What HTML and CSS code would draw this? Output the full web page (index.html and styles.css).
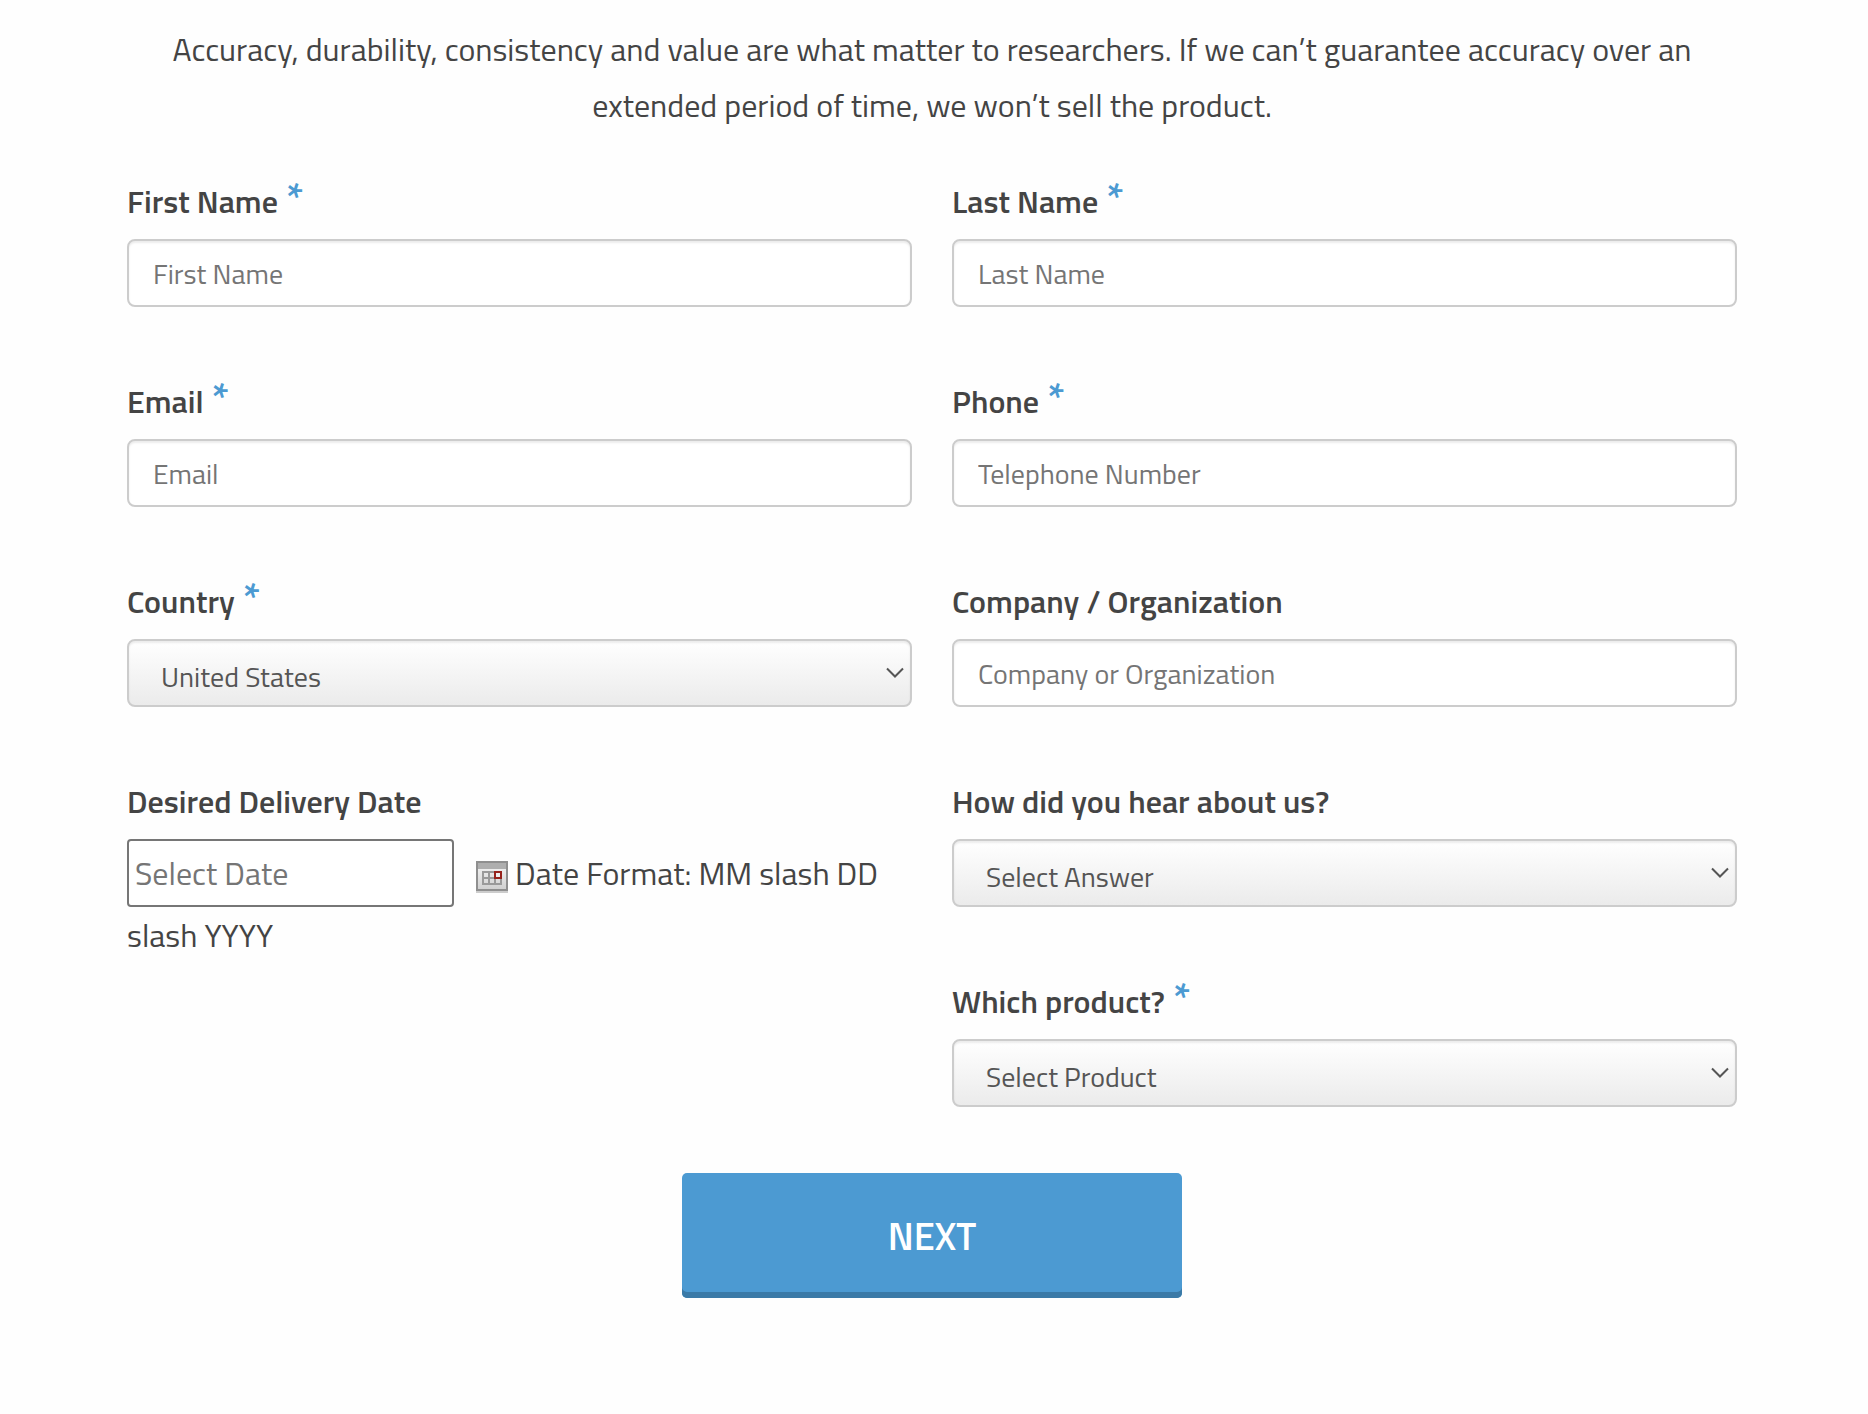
FILE: index.html
```html
<!DOCTYPE html>
<html lang="en">
<head>
  <meta charset="UTF-8" />
  <meta name="viewport" content="width=device-width, initial-scale=1.0"/>
  <title>Request a Quote</title>
  <link rel="stylesheet" href="styles.css">
</head>
<body>
  <form class="quote-form">
    <p class="intro">Accuracy, durability, consistency and value are what matter to researchers. If we can’t guarantee accuracy over an extended period of time, we won’t sell the product.</p>

    <div class="fields">
      <div class="field">
        <label for="first-name">First Name <span class="required">*</span></label>
        <input type="text" id="first-name" placeholder="First Name" />
      </div>
      <div class="field">
        <label for="last-name">Last Name <span class="required">*</span></label>
        <input type="text" id="last-name" placeholder="Last Name" />
      </div>
      <div class="field">
        <label for="email">Email <span class="required">*</span></label>
        <input type="email" id="email" placeholder="Email" />
      </div>
      <div class="field">
        <label for="phone">Phone <span class="required">*</span></label>
        <input type="tel" id="phone" placeholder="Telephone Number" />
      </div>
      <div class="field">
        <label for="country">Country <span class="required">*</span></label>
        <select id="country">
          <option>United States</option>
          <option>Canada</option>
          <option>Mexico</option>
        </select>
      </div>
      <div class="field">
        <label for="company">Company / Organization</label>
        <input type="text" id="company" placeholder="Company or Organization" />
      </div>
      <div class="field field-date">
        <label for="delivery-date">Desired Delivery Date</label>
        <div class="date-row">
          <input type="text" id="delivery-date" class="date-input" placeholder="Select Date" />
          <svg class="calendar" viewBox="0 0 32 32" aria-hidden="true">
            <defs>
              <linearGradient id="sheet" x1="0" y1="0" x2="0" y2="1">
                <stop offset="0" stop-color="#f8f8f8"/>
                <stop offset="1" stop-color="#cfcfcf"/>
              </linearGradient>
            </defs>
            <rect x="0" y="30" width="32" height="2" fill="#cccccc"/>
            <rect x="1" y="1" width="30" height="28" fill="url(#sheet)" stroke="#8f8f8f" stroke-width="2"/>
            <rect x="2" y="2" width="28" height="6" fill="#aeaeae"/>
            <path d="M7 11h18v12H7zM13 11v12M19 11v12M7 17h18" fill="none" stroke="#9a9a9a" stroke-width="2"/>
            <rect x="19" y="11" width="6" height="6" fill="#eeeeee" stroke="#96221c" stroke-width="2"/>
          </svg>
          Date Format: MM slash DD slash YYYY
        </div>
      </div>
      <div class="field">
        <label for="source">How did you hear about us?</label>
        <select id="source">
          <option>Select Answer</option>
          <option>Search Engine</option>
          <option>Referral</option>
        </select>
      </div>
      <div class="field">
        <label for="product">Which product? <span class="required">*</span></label>
        <select id="product">
          <option>Select Product</option>
        </select>
      </div>
    </div>

    <button type="button" class="next-button">NEXT</button>
  </form>
</body>
</html>
```
FILE: styles.css
```css
* {
  box-sizing: border-box;
}

body {
  margin: 0;
  background: #fefefe;
  color: #444;
  font-family: 'Titillium Web', Roboto, 'Liberation Sans', sans-serif;
  font-size: 32px;
  line-height: 56px;
}

.quote-form {
  padding: 21px 131px 40px 127px;
}

.intro {
  margin: 0 0 44px;
  padding: 0 40px;
  text-align: center;
}

.fields {
  display: grid;
  grid-template-columns: 1fr 1fr;
  gap: 70px 40px;
}

.field label {
  display: block;
  margin-bottom: 14px;
  line-height: 48px;
  font-weight: 600;
}

.field-date {
  grid-row: span 2;
}

.required {
  margin-left: 1px;
  color: #4c9ad2;
  font-size: 42px;
  line-height: 1;
  vertical-align: top;
}

input,
select {
  display: block;
  width: 100%;
  height: 68px;
  padding: 0 24px;
  border: 2px solid #ccc;
  border-radius: 8px;
  background: #fff;
  box-shadow: inset 0 2px 2px rgba(0, 0, 0, 0.08);
  color: #555;
  font-family: inherit;
  font-size: 28px;
}

input::placeholder {
  color: #757575;
}

select {
  appearance: none;
  padding: 6px 32px 0;
  background:
    url("data:image/svg+xml,%3Csvg xmlns='http://www.w3.org/2000/svg' width='18' height='12'%3E%3Cpath d='M1 1.5l8 8 8-8' fill='none' stroke='%23555' stroke-width='2'/%3E%3C/svg%3E") no-repeat right 6px center,
    linear-gradient(#fff, #ebebeb);
}

.date-input {
  display: inline-block;
  width: 327px;
  margin-right: 15px;
  padding: 0 6px;
  border-color: #767676;
  border-radius: 4px;
  box-shadow: none;
  font-size: 32px;
}

.calendar {
  width: 32px;
  height: 32px;
  vertical-align: -8px;
}

.next-button {
  display: block;
  width: 500px;
  height: 125px;
  margin: 66px auto 0;
  border: none;
  border-radius: 5px;
  background: #4c9ad2;
  box-shadow: inset 0 -6px #3b7aa7;
  color: #fff;
  font-family: inherit;
  font-size: 38px;
  font-weight: 600;
  cursor: pointer;
}

.next-button:hover {
  background: #3f8dc5;
}
```
